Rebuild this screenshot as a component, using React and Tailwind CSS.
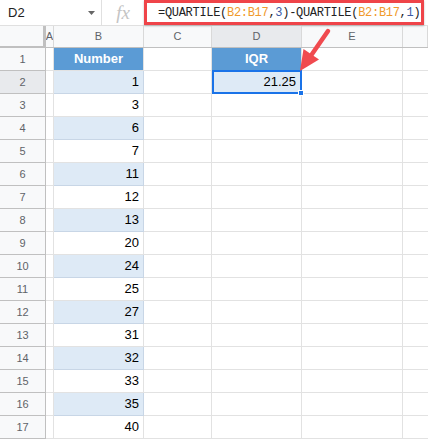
import React from 'react';

const values = [1, 3, 6, 7, 11, 12, 13, 20, 24, 25, 27, 31, 32, 33, 35, 40];

const cols = [
  { key: 'A', w: 'w-[8px]' },
  { key: 'B', w: 'w-[90px]' },
  { key: 'C', w: 'w-[68px]' },
  { key: 'D', w: 'w-[90px]' },
  { key: 'E', w: 'w-[101px]' },
  { key: '', w: 'flex-1' },
];

const Range = ({ children }) => <span className="text-[#f09a2c]">{children}</span>;
const Num = ({ children }) => <span className="text-[#3b5ba5]">{children}</span>;

const App = () => {
  const rows = [{ n: 1 }, ...values.map((v, i) => ({ n: i + 2, v }))];

  return (
    <div className="relative w-[428px] h-[444px] overflow-hidden bg-white font-['Liberation_Sans',Arial,sans-serif]">
      {/* formula bar */}
      <div className="flex h-[26px] border-b border-[#e0e0e0]">
        <div className="w-[102px] flex items-center justify-between pl-[8px] pr-[6px] border-r border-[#e0e0e0]">
          <span className="text-[13px] text-[#222]">D2</span>
          <svg width="7" height="4" viewBox="0 0 7 4"><path d="M0 0h7L3.5 4z" fill="#666" /></svg>
        </div>
        <div className="w-[42px] flex items-center justify-center">
          <span className="text-[19px] italic text-[#c4c4c4] font-['Liberation_Serif',serif] leading-none">fx</span>
        </div>
        <div className="w-[280px] h-[25px] border-[3px] border-[#ef4449] flex items-center pl-[11px] shadow-[0_1px_2px_rgba(0,0,0,0.25)]">
          <span className="font-['Liberation_Mono',monospace] text-[12px] tracking-[-0.3px] text-[#222] whitespace-nowrap">
            =QUARTILE(<Range>B2:B17</Range>,<Num>3</Num>)-QUARTILE(<Range>B2:B17</Range>,<Num>1</Num>)
          </span>
        </div>
      </div>

      {/* column headers */}
      <div className="flex h-[22px] bg-[#f8f9fa] border-b border-[#c0c0c0]">
        <div className="w-[46px] border-r-[3px] border-b-[2px] border-[#c0c0c0] -mb-px"></div>
        {cols.map((c, i) => (
          <div
            key={i}
            className={`${c.w} shrink-0 flex items-center justify-center border-r border-[#d9d9d9] text-[11px] text-[#5f6368] overflow-hidden ${c.key === 'D' ? 'bg-[#e8eaed]' : ''}`}
          >
            {c.key}
          </div>
        ))}
      </div>

      {/* rows */}
      {rows.map(r => {
        const band = r.n % 2 === 0;
        return (
          <div key={r.n} className="flex h-[23px]">
            <div className={`w-[46px] shrink-0 flex items-center justify-center border-r border-b border-[#c0c0c0] text-[11px] text-[#5f6368] ${r.n === 2 ? 'bg-[#e8eaed]' : 'bg-[#f8f9fa]'}`}>
              {r.n}
            </div>
            <div className="w-[8px] shrink-0 border-r border-b border-[#e2e2e2]"></div>
            {r.n === 1 ? (
              <div className="w-[90px] shrink-0 flex items-center justify-center bg-[#5b9bd5] border-r border-b border-[#e2e2e2] text-[13px] font-bold text-white">
                Number
              </div>
            ) : (
              <div className={`w-[90px] shrink-0 flex items-center justify-end pr-[4px] border-r border-b text-[13px] text-black ${band ? 'bg-[#deeaf6] border-[#c8d6e6]' : 'border-[#e2e2e2]'}`}>
                {r.v}
              </div>
            )}
            <div className="w-[68px] shrink-0 border-r border-b border-[#e2e2e2]"></div>
            {r.n === 1 ? (
              <div className="w-[90px] shrink-0 flex items-center justify-center bg-[#5b9bd5] border-r border-b border-[#e2e2e2] text-[13px] font-bold text-white">
                IQR
              </div>
            ) : r.n === 2 ? (
              <div className="relative w-[90px] shrink-0 flex items-center justify-end pr-[4px] bg-[#deeaf6] border-2 border-[#1a73e8] -mt-px text-[13px] text-black">
                21.25
                <div className="absolute -right-[4px] -bottom-[4px] w-[6px] h-[6px] bg-[#1a73e8] border border-white"></div>
              </div>
            ) : (
              <div className="w-[90px] shrink-0 border-r border-b border-[#e2e2e2]"></div>
            )}
            <div className="w-[101px] shrink-0 border-r border-b border-[#e2e2e2]"></div>
            <div className="flex-1 border-b border-[#e2e2e2]"></div>
          </div>
        );
      })}

      {/* red arrow overlay */}
      <svg className="absolute left-0 top-0 pointer-events-none" width="428" height="444">
        <line x1="328" y1="31" x2="310" y2="57" stroke="#f04a4f" strokeWidth="4.5" strokeLinecap="round" />
        <polygon points="300,71 303.5,49 319,59.5" fill="#f04a4f" />
      </svg>
    </div>
  );
};

export default App;
